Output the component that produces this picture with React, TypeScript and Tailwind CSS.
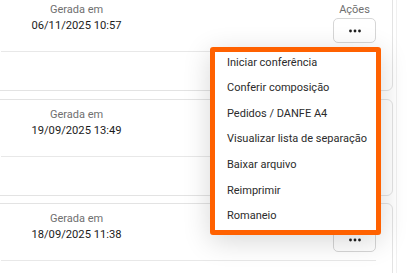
const rows = [
  { date: "06/11/2025 10:57" },
  { date: "19/09/2025 13:49" },
  { date: "18/09/2025 11:38" },
];

const actions = [
  "Iniciar conferência",
  "Conferir composição",
  "Pedidos / DANFE A4",
  "Visualizar lista de separação",
  "Baixar arquivo",
  "Reimprimir",
  "Romaneio",
];

function Dots() {
  return (
    <svg width="14" height="4" viewBox="0 0 14 4" className="text-[#1f1f1f]">
      <circle cx="2.5" cy="2" r="1.4" fill="currentColor" />
      <circle cx="7" cy="2" r="1.4" fill="currentColor" />
      <circle cx="11.5" cy="2" r="1.4" fill="currentColor" />
    </svg>
  );
}

function Row({ date }: { date: string }) {
  return (
    <div className="-ml-4 rounded-md border border-[#e3e3e3] bg-white">
      <div className="flex px-4 pt-[7px] pb-2">
        <div className="w-[151px] text-center">
          <p className="text-[11px] leading-[15px] text-[#6f6f6f]">Gerada em</p>
          <p className="text-[11.2px] leading-[17px] text-[#1b1b1b]">{date}</p>
        </div>
        <div className="flex-1" />
        <div className="flex w-[43px] flex-col items-center">
          <p className="text-[11px] leading-[15px] text-[#6f6f6f]">Ações</p>
          <button className="mt-px flex h-[25px] w-[43px] items-center justify-center rounded-[5px] border border-[#d6d6d6] bg-white">
            <Dots />
          </button>
        </div>
      </div>
      <div className="mx-4 border-t border-[#e8e8e8]" />
      <div className="h-[38px]" />
    </div>
  );
}

export default function App() {
  return (
    <div
      className="relative h-[273px] w-[409px] overflow-hidden bg-white"
      style={{ fontFamily: "Roboto, sans-serif" }}
    >
      <div className="absolute top-0 right-[12px] h-full border-l border-[#f0f0f0]" />
      <div className="-mt-[6px] flex flex-col gap-[7.5px] pr-4">
        {rows.map((r) => (
          <Row key={r.date} date={r.date} />
        ))}
      </div>

      {/* menu de ações aberto */}
      <div className="absolute top-[47px] left-[210px] h-[188px] w-[171px] rounded-[3px] border-[5px] border-[#ff6100] bg-white shadow-[0_6px_28px_rgba(0,0,0,0.16)]">
        <ul className="-mt-[2px]">
          {actions.map((a) => (
            <li
              key={a}
              className="flex h-[25.6px] items-center whitespace-nowrap pl-3 text-[11px] text-[#2b2b2b]"
            >
              {a}
            </li>
          ))}
        </ul>
      </div>
    </div>
  );
}
